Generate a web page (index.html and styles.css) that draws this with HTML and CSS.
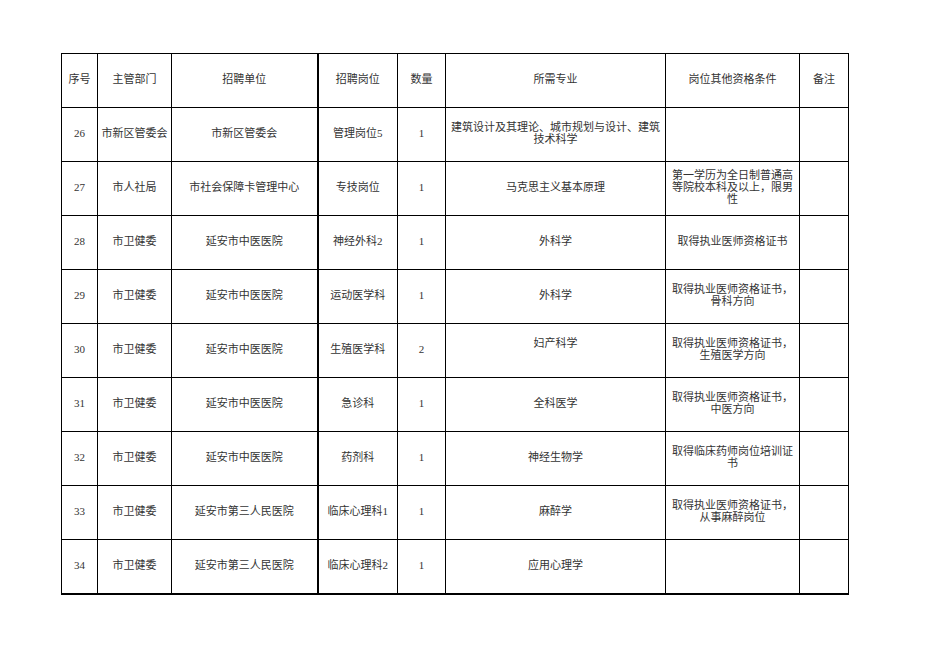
FILE: index.html
```html
<!DOCTYPE html>
<html lang="zh">
<head>
<meta charset="utf-8">
<link rel="stylesheet" href="styles.css">
</head>
<body>
<div class="page">
<table class="sheet">
<colgroup>
<col class="c1"><col class="c2"><col class="c3"><col class="c4"><col class="c5"><col class="c6"><col class="c7"><col class="c8">
</colgroup>
<tr><td>序号</td><td>主管部门</td><td class="thick">招聘单位</td><td>招聘岗位</td><td>数量</td><td>所需专业</td><td>岗位其他资格条件</td><td>备注</td></tr>
<tr><td>26</td><td>市新区管委会</td><td class="thick">市新区管委会</td><td>管理岗位5</td><td>1</td><td>建筑设计及其理论、城市规划与设计、建筑技术科学</td><td></td><td></td></tr>
<tr><td>27</td><td>市人社局</td><td class="thick">市社会保障卡管理中心</td><td>专技岗位</td><td>1</td><td>马克思主义基本原理</td><td>第一学历为全日制普通高等院校本科及以上，限男性</td><td></td></tr>
<tr><td>28</td><td>市卫健委</td><td class="thick">延安市中医医院</td><td>神经外科2</td><td>1</td><td>外科学</td><td>取得执业医师资格证书</td><td></td></tr>
<tr><td>29</td><td>市卫健委</td><td class="thick">延安市中医医院</td><td>运动医学科</td><td>1</td><td>外科学</td><td>取得执业医师资格证书，骨科方向</td><td></td></tr>
<tr><td>30</td><td>市卫健委</td><td class="thick">延安市中医医院</td><td>生殖医学科</td><td>2</td><td class="raised">妇产科学</td><td>取得执业医师资格证书，生殖医学方向</td><td></td></tr>
<tr><td>31</td><td>市卫健委</td><td class="thick">延安市中医医院</td><td>急诊科</td><td>1</td><td>全科医学</td><td>取得执业医师资格证书，中医方向</td><td></td></tr>
<tr><td>32</td><td>市卫健委</td><td class="thick">延安市中医医院</td><td>药剂科</td><td>1</td><td>神经生物学</td><td>取得临床药师岗位培训证书</td><td></td></tr>
<tr><td>33</td><td>市卫健委</td><td class="thick">延安市第三人民医院</td><td>临床心理科1</td><td>1</td><td>麻醉学</td><td>取得执业医师资格证书，从事麻醉岗位</td><td></td></tr>
<tr class="last"><td>34</td><td>市卫健委</td><td class="thick">延安市第三人民医院</td><td>临床心理科2</td><td>1</td><td>应用心理学</td><td></td><td></td></tr>
</table>
</div>
</body>
</html>
```

FILE: styles.css
```css
html, body {
  margin: 0;
  padding: 0;
  background: #ffffff;
}
.page {
  padding: 53px 0 0 61px;
}
.sheet {
  border-collapse: collapse;
  table-layout: fixed;
  width: 787px;
  font-family: "Liberation Serif", "Noto Sans CJK SC", serif;
  font-size: 11px;
  line-height: 12px;
  color: #333333;
}
.c1 { width: 36px; }
.c2 { width: 74px; }
.c3 { width: 146px; }
.c4 { width: 80px; }
.c5 { width: 48px; }
.c6 { width: 220px; }
.c7 { width: 134px; }
.c8 { width: 49px; }
.sheet tr {
  height: 54px;
}
.sheet td {
  border: 1px solid #000;
  padding: 0 2px 3px;
  text-align: center;
  vertical-align: middle;
  word-break: break-all;
}
.sheet td.thick {
  border-right: 2px solid #000;
}
.sheet tr.last td {
  border-bottom: 2px solid #000;
}
.sheet td.raised {
  padding-bottom: 16px;
}
```
